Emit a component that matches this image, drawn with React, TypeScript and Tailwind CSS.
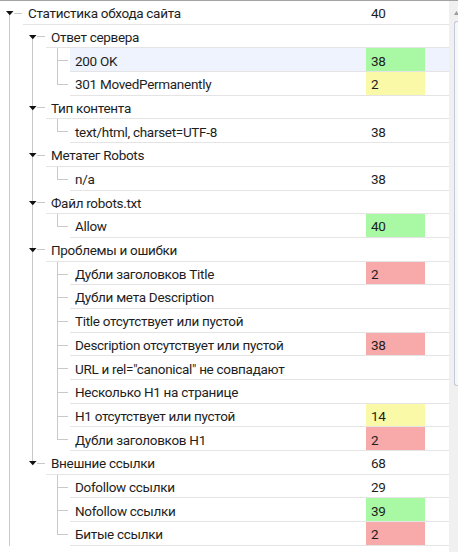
import React from "react";

type Row = {
  level: number;
  label: string;
  value?: string;
  tone?: "green" | "yellow" | "red";
  kids?: boolean;
  first?: boolean;
  last?: boolean;
  pass: boolean[]; // pass-through guide lines for ancestor columns
  hover?: boolean;
};

const rows: Row[] = [
  { level: 0, label: "Статистика обхода сайта", value: "40", kids: true, first: true, pass: [] },
  { level: 1, label: "Ответ сервера", kids: true, first: true, pass: [true] },
  { level: 2, label: "200 OK", value: "38", tone: "green", pass: [true, true], hover: true },
  { level: 2, label: "301 MovedPermanently", value: "2", tone: "yellow", last: true, pass: [true, true] },
  { level: 1, label: "Тип контента", kids: true, pass: [true] },
  { level: 2, label: "text/html, charset=UTF-8", value: "38", last: true, pass: [true, true] },
  { level: 1, label: "Метатег Robots", kids: true, pass: [true] },
  { level: 2, label: "n/a", value: "38", last: true, pass: [true, true] },
  { level: 1, label: "Файл robots.txt", kids: true, pass: [true] },
  { level: 2, label: "Allow", value: "40", tone: "green", last: true, pass: [true, true] },
  { level: 1, label: "Проблемы и ошибки", kids: true, pass: [true] },
  { level: 2, label: "Дубли заголовков Title", value: "2", tone: "red", pass: [true, true] },
  { level: 2, label: "Дубли мета Description", pass: [true, true] },
  { level: 2, label: "Title отсутствует или пустой", pass: [true, true] },
  { level: 2, label: "Description отсутствует или пустой", value: "38", tone: "red", pass: [true, true] },
  { level: 2, label: 'URL и rel="canonical" не совпадают', pass: [true, true] },
  { level: 2, label: "Несколько H1 на странице", pass: [true, true] },
  { level: 2, label: "H1 отсутствует или пустой", value: "14", tone: "yellow", pass: [true, true] },
  { level: 2, label: "Дубли заголовков H1", value: "2", tone: "red", last: true, pass: [true, true] },
  { level: 1, label: "Внешние ссылки", value: "68", kids: true, last: true, pass: [true] },
  { level: 2, label: "Dofollow ссылки", value: "29", pass: [true, false] },
  { level: 2, label: "Nofollow ссылки", value: "39", tone: "green", pass: [true, false] },
  { level: 2, label: "Битые ссылки", value: "2", tone: "red", last: true, pass: [true, false] },
];

const cellW = ["w-[23px]", "w-[23px]", "w-[24px]"];
const lineX = ["left-[9px]", "left-[9px]", "left-[11px]"];

const toneBg = {
  green: "bg-[#a8f8a4]",
  yellow: "bg-[#f9f9a8]",
  red: "bg-[#f8a9a9]",
};

function PassCell({ col, on }: { col: number; on: boolean }) {
  return (
    <div className={`relative h-full shrink-0 ${cellW[col]}`}>
      {on && <div className={`absolute top-0 bottom-0 w-px bg-[#c9c9c9] ${lineX[col]}`} />}
    </div>
  );
}

function OwnCell({ r }: { r: Row }) {
  const col = r.level;
  if (r.kids) {
    return (
      <div className={`relative h-full shrink-0 ${cellW[col]}`}>
        {!r.first && <div className={`absolute top-0 h-[10px] w-px bg-[#c9c9c9] ${lineX[col]}`} />}
        {!r.last && <div className={`absolute top-[14px] bottom-0 w-px bg-[#c9c9c9] ${lineX[col]}`} />}
        <svg className="absolute left-[6px] top-[10px]" width="8" height="5" viewBox="0 0 8 5">
          <polygon points="0,0 7.5,0 3.75,4.2" fill="#111" />
        </svg>
        <div className="absolute left-[14px] right-[1px] top-[11.5px] h-px bg-[#c9c9c9]" />
      </div>
    );
  }
  return (
    <div className={`relative h-full shrink-0 ${cellW[col]}`}>
      <div className={`absolute top-0 w-px bg-[#c9c9c9] ${lineX[col]} ${r.last ? "h-[12.5px]" : "bottom-0"}`} />
      <div className="absolute left-[11px] right-[2px] top-[12px] h-px bg-[#c9c9c9]" />
    </div>
  );
}

function TreeRow({ r }: { r: Row }) {
  return (
    <div className="flex h-[23.7px]">
      {r.pass.map((on, i) => (
        <PassCell key={i} col={i} on={on} />
      ))}
      <OwnCell r={r} />
      <div
        className={`flex min-w-0 flex-1 border-b border-[#e4e4e4] ${r.hover ? "bg-[#eef3fd]" : ""}`}
      >
        <span className="flex min-w-0 flex-1 items-center whitespace-nowrap pl-[5px] pt-[2px]">{r.label}</span>
        <span
          className={`flex h-full w-[59px] shrink-0 items-center pl-[5px] pt-[2px] ${r.tone ? toneBg[r.tone] : ""}`}
        >
          {r.value}
        </span>
        <span className="w-[24px] shrink-0" />
      </div>
    </div>
  );
}

export default function App() {
  return (
    <div
      className="flex h-[552px] w-[458px] overflow-hidden border-t border-[#a3a3a3] bg-white text-[13.5px] tracking-[-0.3px] text-[#1e1e1e]"
      style={{ fontFamily: 'Roboto, "Noto Sans", sans-serif' }}
    >
      <div className="w-[449px] shrink-0">
        {rows.map((r, i) => (
          <TreeRow key={i} r={r} />
        ))}
      </div>
      <div className="flex w-[9px] shrink-0 flex-col bg-[#f0f0f0]">
        <svg className="ml-[5px] mt-[10px]" width="5" height="4" viewBox="0 0 5 4">
          <polygon points="2.5,0 5,4 0,4" fill="#9a9a9a" />
        </svg>
        <div className="ml-[5px] mt-[6px] h-[365px] rounded-l-[3px] border border-r-0 border-[#c2cadb] bg-[#f7f7f7]" />
      </div>
    </div>
  );
}
